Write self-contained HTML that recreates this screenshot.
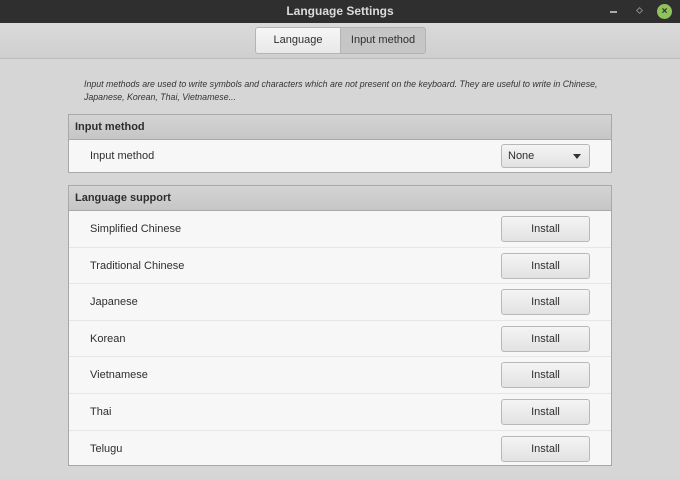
<!DOCTYPE html>
<html><head><style>
*{margin:0;padding:0;box-sizing:border-box}
body{width:680px;height:479px;background:#d6d6d6;font-family:"Liberation Sans",sans-serif;font-size:11px;color:#2e2e2e;position:relative;overflow:hidden}
.title{position:absolute;left:0;top:0;width:680px;height:23px;background:#2f2f2f;color:#dcdcdc;font-weight:bold;font-size:12px;text-align:center;line-height:23px}
.tb{position:absolute;left:0;top:23px;width:680px;height:36px;background:linear-gradient(#dadada,#cfcfcf);border-bottom:1px solid #bcbcbc}
.tab{position:absolute;top:4px;height:27px;line-height:25px;text-align:center;border:1px solid #b4b4b4;font-size:11px}
.desc{position:absolute;left:84px;top:78px;font-size:8.8px;font-style:italic;line-height:12.5px;color:#333;width:530px}
.frame{position:absolute;left:68px;width:544px;border:1px solid #a8a8a8;background:#f7f7f7}
.hd{height:25px;background:linear-gradient(#d4d4d4,#c6c6c6);border-bottom:1px solid #a8a8a8;font-weight:bold;line-height:25px;padding-left:6px;font-size:11px}
.row{position:relative;height:36.6px;line-height:36px;padding-left:21px;border-bottom:1px solid #e6e6e6}
.row:last-child{border-bottom:none}
.btn{position:absolute;left:432px;top:5px;width:89px;height:26px;border:1px solid #b8b8b8;border-radius:3px;background:linear-gradient(#f4f4f4,#e2e2e2);text-align:center;line-height:24px;font-size:11px}
</style></head><body>
<div class="title">Language Settings</div>
<div style="position:absolute;left:610px;top:11px;width:7px;height:2px;background:#aaa"></div>
<div style="position:absolute;left:637px;top:8px;width:5px;height:5px;border:1px solid #888;transform:rotate(45deg)"></div>
<div style="position:absolute;left:657px;top:4px;width:15px;height:15px;border-radius:50%;background:#8fc35a;color:#2f2f2f;font-size:10px;font-weight:bold;text-align:center;line-height:15px">×</div>
<div class="tb">
<div class="tab" style="left:255px;width:86px;background:linear-gradient(#f6f6f6,#e8e8e8);border-radius:3px 0 0 3px">Language</div>
<div class="tab" style="left:340px;width:86px;background:#c6c6c6;border-radius:0 3px 3px 0">Input method</div>
</div>
<div class="desc">Input methods are used to write symbols and characters which are not present on the keyboard. They are useful to write in Chinese, Japanese, Korean, Thai, Vietnamese...</div>
<div class="frame" style="top:114px;height:59px">
<div class="hd">Input method</div>
<div class="row" style="height:32px;line-height:32px">Input method
<div class="btn" style="top:4px;height:24px;line-height:22px;text-align:left;padding-left:6px">None<span style="position:absolute;right:8px;top:9px;border-left:4px solid transparent;border-right:4px solid transparent;border-top:5px solid #333"></span></div></div>
</div>
<div class="frame" style="top:185px;height:281px">
<div class="hd">Language support</div>
<div class="row">Simplified Chinese<div class="btn">Install</div></div>
<div class="row">Traditional Chinese<div class="btn">Install</div></div>
<div class="row">Japanese<div class="btn">Install</div></div>
<div class="row">Korean<div class="btn">Install</div></div>
<div class="row">Vietnamese<div class="btn">Install</div></div>
<div class="row">Thai<div class="btn">Install</div></div>
<div class="row">Telugu<div class="btn">Install</div></div>
</div>
</body></html>
